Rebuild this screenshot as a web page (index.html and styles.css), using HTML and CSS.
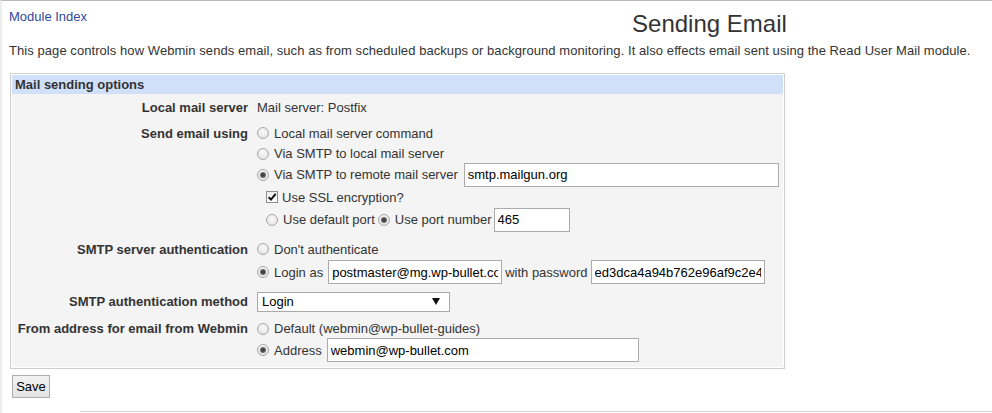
FILE: index.html
```html
<!DOCTYPE html>
<html>
<head>
<meta charset="utf-8">
<title>Sending Email</title>
<link rel="stylesheet" href="styles.css">
</head>
<body>
<div class="page">
  <div class="header">
    <a class="modlink" href="#">Module Index</a>
    <h1 class="title">Sending Email</h1>
  </div>
  <p class="desc">This page controls how Webmin sends email, such as from scheduled backups or background monitoring. It also effects email sent using the Read User Mail module.</p>

  <div class="box">
    <div class="box-head">Mail sending options</div>
    <div class="box-body">

      <div class="row ra">
        <div class="lbl"><div class="line h16">Local mail server</div></div>
        <div class="val"><div class="line h16">Mail server: Postfix</div></div>
      </div>

      <div class="row">
        <div class="lbl"><div class="line h22">Send email using</div></div>
        <div class="val">
          <div class="line h22"><span class="rad"></span>Local mail server command</div>
          <div class="line h19"><span class="rad"></span>Via SMTP to local mail server</div>
          <div class="line h23"><span class="rad on"></span>Via SMTP to remote mail server<input class="txt w-host" type="text" value="smtp.mailgun.org"></div>
          <div class="line h22 sub"><span class="cb"><svg width="10" height="10" viewBox="0 0 10 10"><path d="M1.6 5.2 L4 7.6 L8.6 1.8" fill="none" stroke="#111" stroke-width="2"/></svg></span>Use SSL encryption?</div>
          <div class="line h23 sub"><span class="rad"></span>Use default port<span class="rad on r2"></span>Use port number<input class="txt w-port" type="text" value="465"></div>
        </div>
      </div>

      <div class="row">
        <div class="lbl"><div class="line h22">SMTP server authentication</div></div>
        <div class="val">
          <div class="line h22"><span class="rad"></span>Don't authenticate</div>
          <div class="line h24"><span class="rad on"></span>Login as<input class="txt w-user" type="text" value="postmaster@mg.wp-bullet.com"><span class="mid">with password</span><input class="txt w-pass" type="text" value="ed3dca4a94b762e96af9c2e4f1"></div>
        </div>
      </div>

      <div class="row">
        <div class="lbl"><div class="line h21">SMTP authentication method</div></div>
        <div class="val">
          <div class="line h21"><div class="sel"><span>Login</span><svg width="8" height="7" viewBox="0 0 8 7"><path d="M0 0 H8 L4 7 Z" fill="#111"/></svg></div></div>
        </div>
      </div>

      <div class="row re">
        <div class="lbl"><div class="line h19">From address for email from Webmin</div></div>
        <div class="val">
          <div class="line h19"><span class="rad"></span>Default (webmin@wp-bullet-guides)</div>
          <div class="line h24"><span class="rad on"></span>Address<input class="txt w-addr" type="text" value="webmin@wp-bullet.com"></div>
        </div>
      </div>

    </div>
  </div>

  <button class="save" type="button">Save</button>
</div>
<div class="rule"></div>
</body>
</html>
```

FILE: styles.css
```css
html, body {
  margin: 0;
  padding: 0;
  background: #fff;
}
body {
  border-top: 1px solid #b9b9b9;
  border-left: 2px solid #ededed;
  font-family: "Liberation Sans", Arial, sans-serif;
  font-size: 13px;
  color: #333;
  height: 413px;
  box-sizing: border-box;
  overflow: hidden;
}
.page {
  padding: 0 0 0 7px;
}
.header {
  display: flex;
  align-items: flex-start;
  height: 29px;
  padding-top: 8px;
}
.modlink {
  color: #33499c;
  text-decoration: none;
  line-height: 15px;
}
.title {
  margin: 1px 0 0 545px;
  font-size: 24px;
  font-weight: normal;
  line-height: 28px;
  color: #333;
}
.desc {
  margin: 0;
  padding-top: 5px;
  line-height: 15px;
  color: #333;
  letter-spacing: 0.065px;
}
.box {
  margin: 15px 0 0 1px;
  width: 775px;
  box-sizing: border-box;
  border: 1px solid #cfcfcf;
  padding: 1px;
  background: #fff;
}
.box-head {
  background: #d0e0f9;
  height: 19px;
  line-height: 19px;
  font-weight: bold;
  padding-left: 3px;
  color: #333;
}
.box-body {
  background: #f4f4f4;
  padding-bottom: 2px;
}
.row {
  display: grid;
  grid-template-columns: 238px 1fr;
  padding: 4px 0 3px;
}
.ra { padding-top: 5px; }
.lbl {
  font-weight: bold;
  padding-right: 2px;
}
.lbl .line {
  justify-content: flex-end;
}
.val {
  padding-left: 7px;
}
.line {
  display: flex;
  align-items: center;
  white-space: nowrap;
}
.h16 { height: 16px; }
.h19 { height: 19px; }
.h21 { height: 21px; }
.h22 { height: 22px; }
.h23 { height: 23px; }
.h24 { height: 24px; }
.sub { padding-left: 9px; }

.rad {
  display: inline-block;
  flex: none;
  width: 12px;
  height: 12px;
  box-sizing: border-box;
  border-radius: 50%;
  border: 1px solid #a8a8a8;
  background: radial-gradient(circle at 50% 35%, #fafafa 0%, #e4e4e4 80%);
  margin-right: 5px;
  position: relative;
}
.rad.on::after {
  content: "";
  position: absolute;
  left: 2px;
  top: 2px;
  width: 6px;
  height: 6px;
  border-radius: 50%;
  background: radial-gradient(circle, #333 0%, #555 45%, #9a9a9a 100%);
}
.rad.r2 { margin-left: 3px; }

.cb {
  display: inline-flex;
  align-items: center;
  justify-content: center;
  flex: none;
  width: 12px;
  height: 12px;
  box-sizing: border-box;
  border: 1px solid #8e8e8e;
  background: linear-gradient(#ececec, #fdfdfd);
  margin-right: 4px;
}

.txt {
  box-sizing: border-box;
  height: 24px;
  border: 1px solid #ababab;
  background: #fff;
  font-family: "Liberation Sans", Arial, sans-serif;
  font-size: 13px;
  color: #000;
  padding: 0 3px;
  margin: 0 0 0 4px;
  outline: none;
}
.w-host { width: 315px; margin-left: 6px; }
.w-port { width: 76px; margin-left: 2px; }
.w-user { width: 174px; margin-left: 5px; }
.w-pass { width: 174px; margin-left: 3px; }
.w-addr { width: 312px; margin-left: 5px; }
.mid { margin-left: 3px; }

.sel {
  box-sizing: border-box;
  width: 193px;
  height: 20px;
  border: 1px solid #a9a9a9;
  background: #fff;
  display: flex;
  align-items: center;
  justify-content: space-between;
  padding: 0 9px 0 4px;
  color: #000;
}

.save {
  margin: 6px 0 0 3px;
  width: 38px;
  height: 23px;
  padding: 0;
  border: 1px solid #adadad;
  background: linear-gradient(#f2f2f2, #e3e3e3);
  font-family: "Liberation Sans", Arial, sans-serif;
  font-size: 13px;
  color: #000;
  border-radius: 0;
  display: block;
}
.rule {
  margin: 13px 0 0 78px;
  border-top: 1px solid #d6d6d6;
}
```
